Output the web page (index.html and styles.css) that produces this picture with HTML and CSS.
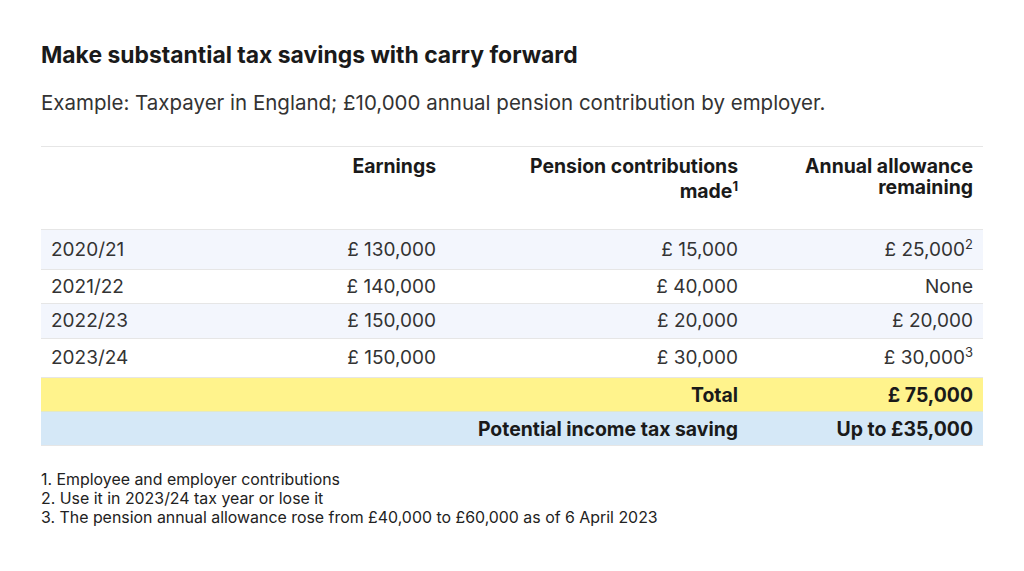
FILE: index.html
```html
<!DOCTYPE html>
<html lang="en">
<head>
<meta charset="utf-8">
<title>Carry forward</title>
<link rel="stylesheet" href="styles.css">
</head>
<body>
<main class="page">
  <h2 class="title">Make substantial tax savings with carry forward</h2>
  <p class="lead">Example: Taxpayer in England; £10,000 annual pension contribution by employer.</p>
  <table class="tax">
    <colgroup>
      <col class="c1"><col class="c2"><col class="c3"><col class="c4">
    </colgroup>
    <thead>
      <tr>
        <th></th>
        <th>Earnings</th>
        <th>Pension contributions<br>made<sup>1</sup></th>
        <th>Annual allowance<br>remaining</th>
      </tr>
    </thead>
    <tbody>
      <tr class="stripe r1"><td>2020/21</td><td>£ 130,000</td><td>£ 15,000</td><td>£ 25,000<sup>2</sup></td></tr>
      <tr class="r2"><td>2021/22</td><td>£ 140,000</td><td>£ 40,000</td><td>None</td></tr>
      <tr class="stripe r3"><td>2022/23</td><td>£ 150,000</td><td>£ 20,000</td><td>£ 20,000</td></tr>
      <tr class="r4"><td>2023/24</td><td>£ 150,000</td><td>£ 30,000</td><td>£ 30,000<sup>3</sup></td></tr>
      <tr class="total"><td></td><td></td><td>Total</td><td>£ 75,000</td></tr>
      <tr class="saving"><td></td><td></td><td>Potential income tax saving</td><td>Up to £35,000</td></tr>
    </tbody>
  </table>
  <ol class="notes">
    <li>1. Employee and employer contributions</li>
    <li>2. Use it in 2023/24 tax year or lose it</li>
    <li>3. The pension annual allowance rose from £40,000 to £60,000 as of 6 April 2023</li>
  </ol>
</main>
</body>
</html>
```

FILE: styles.css
```css
html, body {
  margin: 0;
  padding: 0;
  background: #ffffff;
}
body {
  font-family: Inter, "Noto Sans", "Liberation Sans", sans-serif;
  color: #333333;
}
.page {
  padding: 41px 41px 0 41px;
}
.title {
  margin: 0;
  font-size: 22.9px;
  line-height: 28px;
  font-weight: 700;
  color: #1a1a1a;
}
.lead {
  margin: 20px 0 0 0;
  font-size: 20.5px;
  line-height: 28px;
  color: #333333;
}
.tax {
  margin-top: 29px;
  width: 942px;
  border-collapse: collapse;
  table-layout: fixed;
  font-size: 19px;
  border-top: 1px solid #e6e6e6;
}
.c1 { width: 200px; }
.c2 { width: 205px; }
.c3 { width: 302px; }
.c4 { width: 235px; }
.tax th, .tax td {
  padding: 0 10px;
  text-align: right;
}
.tax th:first-child, .tax td:first-child {
  text-align: left;
}
.tax th {
  font-size: 19.4px;
  font-weight: 700;
  color: #1a1a1a;
  vertical-align: top;
  padding-top: 9px;
  height: 73px;
  line-height: 21px;
  border-bottom: 1px solid #e6e6e6;
}
.tax td {
  color: #333333;
  border-bottom: 1px solid #e6e6e6;
  line-height: 22px;
}
.tax sup {
  font-size: 13px;
  line-height: 0;
  vertical-align: 7px;
}
.tax th sup {
  line-height: 1.5;
}
.r1 td { height: 39px; }
.r2 td { height: 33px; }
.r3 td { height: 34px; }
.r4 td { height: 38px; }
.stripe td { background: #f3f6fd; }
.total td {
  background: #fff38c;
  font-size: 19.4px;
  font-weight: 700;
  color: #1a1a1a;
  height: 33px;
  border-bottom: 1px solid #e2e8c8;
}
.saving td {
  background: #d5e8f7;
  font-size: 19.4px;
  font-weight: 700;
  color: #1a1a1a;
  height: 33px;
}
.notes {
  list-style: none;
  margin: 24px 0 0 0;
  padding: 0;
  font-size: 15.9px;
  line-height: 19px;
  color: #222222;
}
```
